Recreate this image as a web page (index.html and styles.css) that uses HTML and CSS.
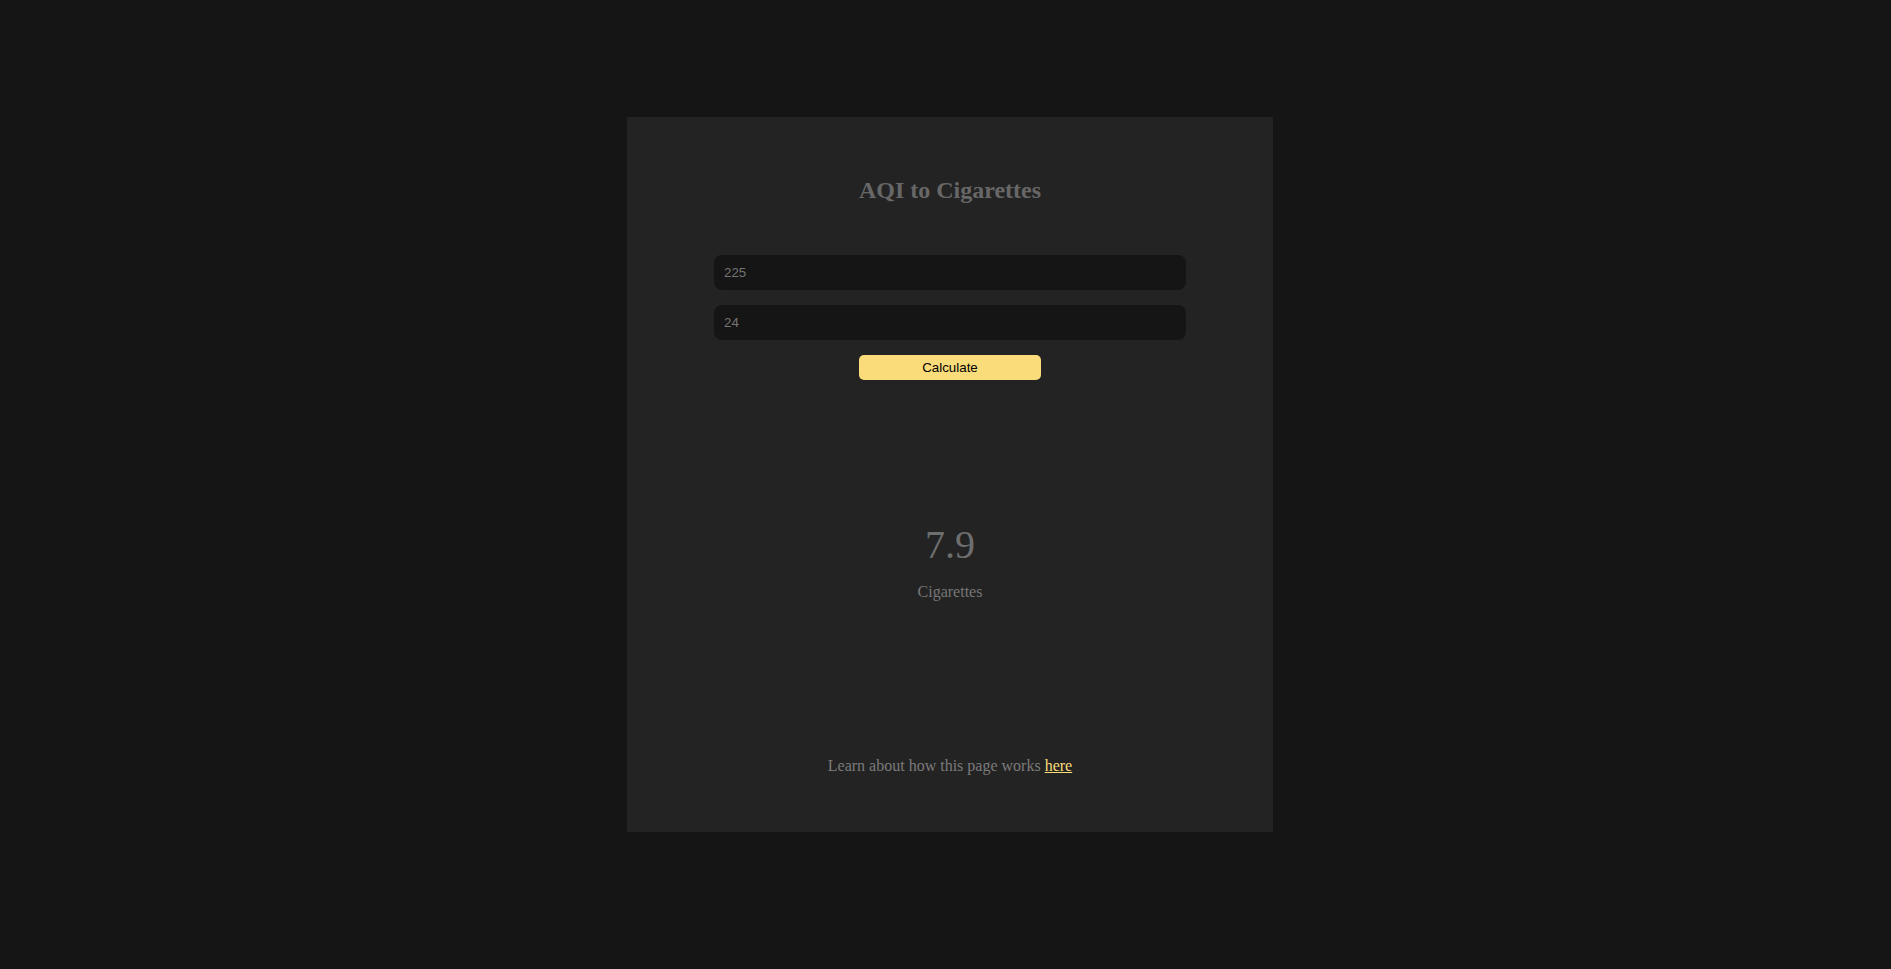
FILE: index.html
```html
<!DOCTYPE html>
<html lang="en">
<head>
<meta charset="utf-8">
<title>AQI to Cigarettes</title>
<link rel="stylesheet" href="styles.css">
</head>
<body>
<main class="page">
  <section class="card">
    <h2 class="title">AQI to Cigarettes</h2>
    <form class="form">
      <input class="field" type="text" value="225">
      <input class="field" type="text" value="24">
      <button class="btn" type="button">Calculate</button>
    </form>
    <div class="result">7.9</div>
    <div class="unit">Cigarettes</div>
    <p class="footer">Learn about how this page works <a href="#">here</a></p>
  </section>
</main>
</body>
</html>
```
FILE: styles.css
```css
html, body {
  margin: 0;
  padding: 0;
  background: #151515;
  height: 100%;
}
body {
  font-family: "Liberation Serif", "Times New Roman", serif;
}
.page {
  display: flex;
  justify-content: center;
  padding-top: 117px;
  padding-left: 9px;
  box-sizing: border-box;
  min-height: 100%;
}
.card {
  width: 646px;
  height: 715px;
  background: #232323;
  display: flex;
  flex-direction: column;
  align-items: center;
  box-sizing: border-box;
  padding-top: 59px;
}
.title {
  margin: 0;
  font-size: 24px;
  line-height: 28px;
  font-weight: bold;
  color: #676767;
}
.form {
  margin-top: 51px;
  display: flex;
  flex-direction: column;
  align-items: center;
  gap: 15px;
}
.field {
  width: 472px;
  height: 35px;
  box-sizing: border-box;
  border: none;
  outline: none;
  border-radius: 8px;
  background: #151515;
  color: #747474;
  padding: 0 10px;
  font-family: "Liberation Sans", Arial, sans-serif;
  font-size: 13.333px;
}
.btn {
  width: 182px;
  height: 25px;
  border: none;
  border-radius: 5px;
  background: #fbdc7a;
  color: #000;
  font-family: "Liberation Sans", Arial, sans-serif;
  font-size: 13.333px;
  padding: 0;
  cursor: pointer;
}
.result {
  margin-top: 142px;
  font-size: 40px;
  line-height: 46px;
  color: #6e6e6e;
}
.unit {
  margin-top: 15px;
  font-size: 16px;
  line-height: 18px;
  color: #777;
}
.footer {
  margin: 156px 0 0;
  font-size: 16px;
  line-height: 18px;
  color: #7b7b7b;
}
.footer a {
  color: #fbdc7a;
  text-decoration: underline;
}
```
